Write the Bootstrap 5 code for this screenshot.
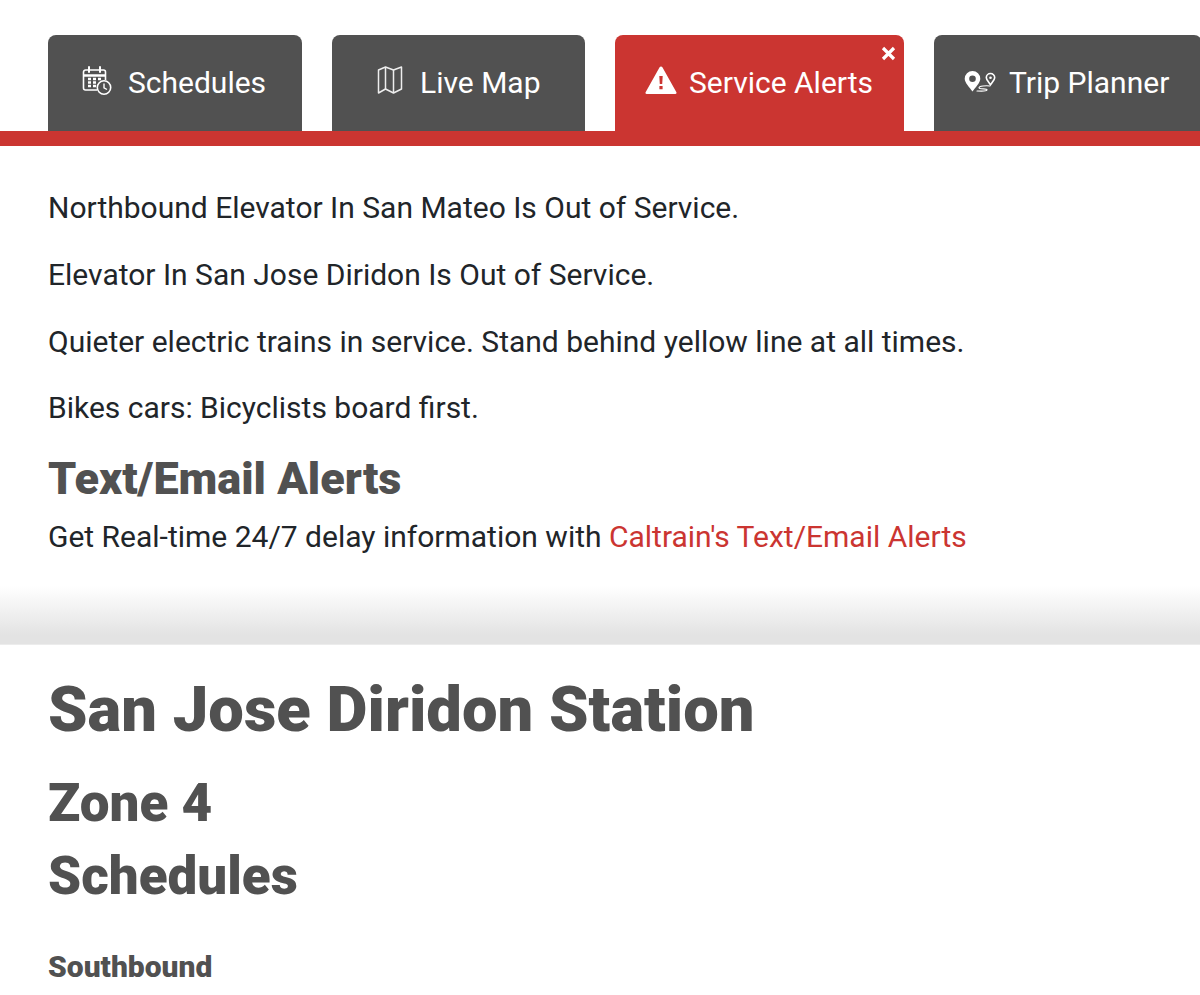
<!DOCTYPE html>
<html lang="en"><head><meta charset="utf-8"><title>San Jose Diridon Station</title>
<link href="https://cdn.jsdelivr.net/npm/bootstrap@5.3.0/dist/css/bootstrap.min.css" rel="stylesheet">
<style>
html,body{overflow:hidden;height:995px}
body{font-family:Roboto,"Liberation Sans",sans-serif;color:#212529;font-size:30px;line-height:1.2;background:#fff}
.tabbar{padding:35px 0 0 48px;gap:30px;border-bottom:15px solid #cb3531;flex-wrap:nowrap;overflow:hidden;height:146px}
.tabitem{height:96px;width:254px;border-radius:8px 8px 0 0;background:#515151;color:#fff;text-decoration:none;font-size:30px;padding-top:30px;padding-left:34px;gap:16px;flex:none;position:relative;align-items:flex-start}
.tabitem:hover{color:#fff}
.tabitem svg{flex:none;display:block}
.tab-map{width:253px;padding-left:45px;gap:17px}
.tab-alert{width:289px;background:#cb3531;padding-left:30px;gap:12px}
.tab-trip{width:268px;padding-left:30px;gap:13px}
.closer{position:absolute;top:11px;right:8px;width:15px;height:15px}
.alerts-area{padding:44px 48px 0;height:499px;background:linear-gradient(to bottom,#fff 0,#fff 440px,#e3e3e3 489px,#e3e3e3 100%);border-bottom:1px solid #ececec}
.alerts-area p{margin:0 0 31.8px;line-height:35px}
.alert-head{font-size:45px;font-weight:900;color:#515151;line-height:52px;margin:-4px 0 14px}
.alerts-area a{color:#cb3531;text-decoration:none}
.station{padding:0 48px}
.station h1{font-size:63.3px;font-weight:900;color:#515151;line-height:74px;margin:27px 0 0}
.station h2{font-size:53px;font-weight:900;color:#515151;line-height:62px;margin:26px 0 0}
.station h2.sched{margin:11px 0 0}
.station h3{font-size:30px;font-weight:900;color:#515151;line-height:35px;margin:42px 0 0}
</style></head><body>
<nav class="tabbar d-flex">
<a class="tabitem d-flex" href="#"><svg width="30" height="32" viewBox="0 0 30 32" fill="none" stroke="#fff" stroke-width="1.6"><path d="M15 25H3.500a2 2 0 0 1-2-2V7a2 2 0 0 1 2-2h18a2 2 0 0 1 2 2v8"/><path d="M2 10.500h21" stroke-width="2.500"/><path d="M7 2v5M18 2v5" stroke-linecap="round" stroke-width="2"/><path d="M6 14h3M11 14h3M16 14h3M6 17.500h3M11 17.500h3M6 21h3M11 21h3" stroke-width="2.400"/><circle cx="22" cy="22.500" r="6.700" fill="#515151"/><path d="M22 18.500v4.300l3 1.700" stroke-width="1.400"/></svg><span>Schedules</span></a>
<a class="tabitem tab-map d-flex" href="#"><svg width="26" height="30" viewBox="0 0 26 30" fill="none" stroke="#eee" stroke-width="1.500" stroke-linejoin="round"><path d="M1.500 5l7-3 8 3 8-3v22l-8 4-8-4-7 4z"/><path d="M8.500 2v22M16.500 5v23"/></svg><span>Live Map</span></a>
<a class="tabitem tab-alert d-flex" href="#"><svg width="32" height="30" viewBox="0 0 32 30"><path fill="#fff" d="M16 1.500c.6 0 1.100.3 1.400.8l14 25c.4.8-.1 1.700-1 1.700H1.600c-.9 0-1.400-.9-1-1.700l14-25c.3-.5.800-.8 1.400-.8z"/><path fill="#cb3531" d="M14.300 11h3.400l-.5 8h-2.400zM14.400 21h3.200v3.200h-3.200z"/></svg><span>Service Alerts</span><svg class="closer" viewBox="0 0 15 15"><path d="M2 2l11 11M13 2L2 13" stroke="#fff" stroke-width="3.200"/></svg></a>
<a class="tabitem tab-trip d-flex" href="#"><svg width="32" height="30" viewBox="0 0 32 30"><path fill="#fff" fill-rule="evenodd" d="M8.500 6a7.800 7.800 0 0 1 7.800 7.800c0 4-4.800 8.700-7.800 12.700-3-4-7.800-8.700-7.800-12.700A7.800 7.800 0 0 1 8.500 6zm0 4.500a3.300 3.300 0 1 0 0 6.600 3.300 3.300 0 0 0 0-6.600z"/><path fill="none" stroke="#fff" stroke-width="1.600" d="M26.500 8.500a4.200 4.200 0 0 1 4.200 4.200c0 2-2.200 4-4.200 7-2-3-4.200-5-4.200-7a4.200 4.200 0 0 1 4.200-4.200z"/><circle cx="26.500" cy="12.700" r="1.300" fill="#fff"/><path fill="none" stroke="#fff" stroke-width="1.100" stroke-linecap="round" d="M26 21c-4-.5-11 0-11 1.800s8 .5 8 2-5 1.400-10 1.200"/></svg><span>Trip Planner</span></a>
</nav>
<section class="alerts-area">
<p>Northbound Elevator In San Mateo Is Out of Service.</p>
<p>Elevator In San Jose Diridon Is Out of Service.</p>
<p>Quieter electric trains in service. Stand behind yellow line at all times.</p>
<p>Bikes cars: Bicyclists board first.</p>
<h2 class="alert-head">Text/Email Alerts</h2>
<div>Get Real-time 24/7 delay information with <a href="#">Caltrain's Text/Email Alerts</a></div>
</section>
<section class="station">
<h1>San Jose Diridon Station</h1>
<h2>Zone 4</h2>
<h2 class="sched">Schedules</h2>
<h3>Southbound</h3>
</section>
</body></html>
